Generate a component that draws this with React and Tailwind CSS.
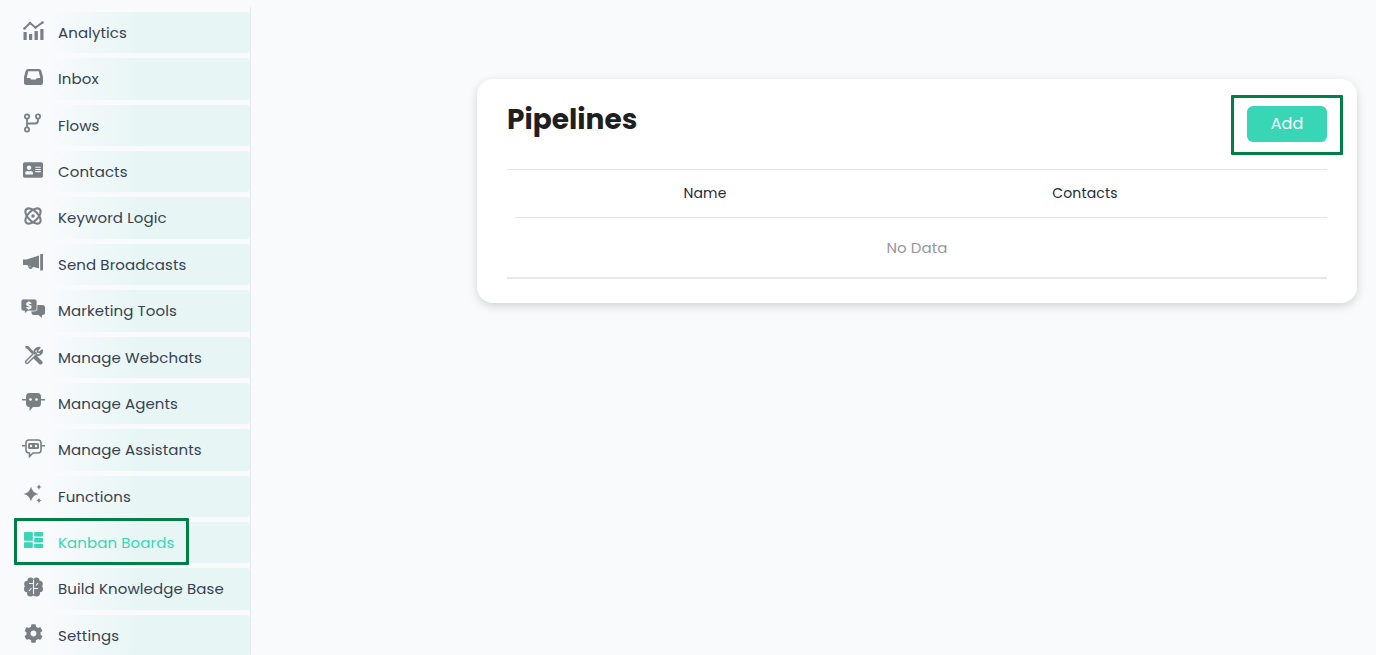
import React from "react";
import { FaCog, FaAddressCard } from "react-icons/fa";

const c = "#7a7f85";
const bg = "#f3f9f9";
const Analytics = () => (
  <svg width="21" height="19" viewBox="0 0 21 19" fill={c}>
    <rect x="0.5" y="11" width="3.2" height="8" rx=".6" /><rect x="6" y="13" width="3.2" height="6" rx=".6" /><rect x="11.5" y="10" width="3.4" height="9" rx=".6" /><rect x="17.3" y="8" width="3.2" height="11" rx=".6" />
    <path d="M1.5 7.500L7 2l5.500 4.500L19.500 1.500" fill="none" stroke={c} strokeWidth="1.900" />
    <circle cx="1.500" cy="7.500" r="1.300" /><circle cx="7" cy="2" r="1.300" /><circle cx="12.500" cy="6.500" r="1.300" /><circle cx="19.500" cy="1.500" r="1.300" />
  </svg>
);
const Inbox = () => (
  <svg width="19" height="16" viewBox="0 0 19 16" fill={c}>
    <path fillRule="evenodd" d="M4 0h11a2.500 2.500 0 012.400 1.900L19 8v5.500a2.500 2.500 0 01-2.500 2.500h-14A2.500 2.500 0 010 13.500V8l1.600-6.100A2.500 2.500 0 014 0zm.3 2.200L2.700 9H6l1.200 1.500h4.600L13 9h3.300l-1.600-6.800z" />
  </svg>
);
const Flows = () => (
  <svg width="20" height="20" viewBox="0 0 20 20" fill="none" stroke={c} strokeWidth="1.800">
    <circle cx="4" cy="3.500" r="2.100" /><circle cx="15" cy="3.500" r="2.100" /><circle cx="4" cy="16.500" r="2.100" />
    <path d="M4 5.600v8.800M15 5.600v1.900a3 3 0 01-3 3H4" />
  </svg>
);
const Atom = () => (
  <svg width="20" height="20" viewBox="0 0 20 20" fill="none" stroke={c} strokeWidth="2.100">
    <ellipse cx="10" cy="10" rx="9.500" ry="5" transform="rotate(45 10 10)" />
    <ellipse cx="10" cy="10" rx="9.500" ry="5" transform="rotate(-45 10 10)" />
    <circle cx="10" cy="10" r="1.800" fill={c} stroke="none" />
  </svg>
);
const Horn = () => (
  <svg width="20" height="17" viewBox="0 0 20 17" fill={c}>
    <path d="M0 5.500h3.500L16 1.500v13L3.500 11H0z" />
    <rect x="17.200" y="0" width="2.800" height="16.500" rx=".5" />
    <path d="M5 11l.5 2.500a2.300 2.300 0 004.300-.2l.2-1.300-2-.5-.3 1a.6.6 0 01-1.100 0L6.300 11z" />
  </svg>
);
const Marketing = () => (
  <svg width="24" height="19" viewBox="0 0 24 19" fill={c}>
    <path d="M10 6h11.500A2.500 2.500 0 0124 8.500v5a2.500 2.500 0 01-2.500 2.500h-.5v3l-3.500-3H13a2.500 2.500 0 01-2.500-2.500z" />
    <path d="M2.500 0h11A2.500 2.500 0 0116 2.500v7a2.500 2.500 0 01-2.500 2.500h-7L3.500 15v-3h-1A2.500 2.500 0 010 9.500v-7A2.500 2.500 0 012.500 0z" stroke={bg} strokeWidth="0.800" />
    <text x="8" y="9.500" fontSize="9.500" fontWeight="700" fill="#fff" textAnchor="middle" fontFamily="Poppins, Lato, sans-serif">$</text>
  </svg>
);
const Tools = () => (
  <svg width="19" height="19" viewBox="0 0 19 19" fill="none" stroke={c}>
    <path d="M1.500 1.500l1.800-.5L9 7" strokeWidth="2.600" strokeLinejoin="round" />
    <path d="M10.500 10.500L16.500 16.500" strokeWidth="4" strokeLinecap="round" />
    <path d="M3 16L11 8" strokeWidth="4.200" strokeLinecap="round" />
    <path d="M3 16L11 8" stroke={bg} strokeWidth="1.500" strokeLinecap="round" />
    <path d="M11 8.200a4.200 4.200 0 01.700-5.200 4.400 4.400 0 014-1.400l-2.400 2.400.4 2 2 .5 2.400-2.400a4.300 4.300 0 01-1.400 4 4.200 4.200 0 01-4.700.6" strokeWidth="1.800" strokeLinejoin="round" />
  </svg>
);
const Agent = () => (
  <svg width="23" height="20" viewBox="0 0 23 20" fill={c}>
    <path d="M7.500 1h8a3.500 3.500 0 013.500 3.500v7a3.500 3.500 0 01-3.500 3.500H11l-3.500 4v-4A3.500 3.500 0 014 11.500v-7A3.500 3.500 0 017.500 1z" />
    <rect x="0" y="7" width="4" height="1.500" /><rect x="19" y="7" width="4" height="1.500" />
    <circle cx="8.500" cy="7.500" r="1.300" fill="#fff" /><circle cx="14.500" cy="7.500" r="1.300" fill="#fff" />
  </svg>
);
const Assistant = () => (
  <svg width="23" height="20" viewBox="0 0 23 20" fill="none" stroke={c} strokeWidth="1.600">
    <path d="M7 2h9a3 3 0 013 3v7a3 3 0 01-3 3h-5l-3.500 3.500V15H7a3 3 0 01-3-3V5a3 3 0 013-3z" />
    <path d="M0 7.800h3.500M19.500 7.800H23" />
    <rect x="6" y="5" width="11" height="6" rx="1.500" fill={c} stroke="none" />
    <circle cx="9" cy="8" r="1.200" fill="#fff" stroke="none" /><circle cx="14" cy="8" r="1.200" fill="#fff" stroke="none" />
  </svg>
);
const Stars = () => (
  <svg width="20" height="20" viewBox="0 0 20 20" fill={c}>
    <path d="M8 2.500C9 6.500 11 9 15.500 10 11 11 9 13.500 8 17.500 7 13.500 5 11 .500 10 5 9 7 6.500 8 2.500z" />
    <path d="M16 0c.4 2 1 2.600 3 3-2 .4-2.600 1-3 3-.4-2-1-2.600-3-3 2-.4 2.600-1 3-3z" />
    <path d="M16 13.500c.4 2 1 2.600 3 3-2 .4-2.600 1-3 3-.4-2-1-2.600-3-3 2-.4 2.600-1 3-3z" />
  </svg>
);
const Kanban = () => (
  <svg width="19" height="16" viewBox="0 0 19 16" fill="#38d6b4" style={{ marginTop: "-1px" }}>
    <rect x="0" y="0" width="8.800" height="8.800" rx=".8" /><rect x="0" y="10.200" width="8.800" height="5.800" rx=".8" />
    <rect x="10.200" y="0" width="8.800" height="4.600" rx=".8" /><rect x="10.200" y="6" width="8.800" height="4.400" rx=".8" /><rect x="10.200" y="11.800" width="8.800" height="4.200" rx=".8" />
  </svg>
);
const Brain = () => (
  <svg width="19" height="20" viewBox="0 0 19 20">
    <g fill={c}>
      <circle cx="6.500" cy="3.500" r="3" /><circle cx="12.500" cy="3.500" r="3" />
      <circle cx="3.500" cy="7" r="3.300" /><circle cx="15.500" cy="7" r="3.300" />
      <circle cx="3.300" cy="12" r="3.300" /><circle cx="15.700" cy="12" r="3.300" />
      <circle cx="6.500" cy="16" r="3.500" /><circle cx="12.500" cy="16" r="3.500" />
      <rect x="4" y="3" width="11" height="15" />
    </g>
    <path d="M9.500 3v14M5 6.500h4.500M9.500 11.500H14M5 14l2.500-3M14 6l-2 2.500" stroke="#eef7f5" strokeWidth="1.100" fill="none" />
  </svg>
);

const items = [
  ["Analytics", <Analytics />],
  ["Inbox", <Inbox />],
  ["Flows", <Flows />],
  ["Contacts", <FaAddressCard size={20} color={c} />],
  ["Keyword Logic", <Atom />],
  ["Send Broadcasts", <Horn />],
  ["Marketing Tools", <Marketing />],
  ["Manage Webchats", <Tools />],
  ["Manage Agents", <Agent />],
  ["Manage Assistants", <Assistant />],
  ["Functions", <Stars />],
  ["Kanban Boards", <Kanban />, true],
  ["Build Knowledge Base", <Brain />],
  ["Settings", <FaCog size={19} color={c} />],
];

export default function App() {
  return (
    <div className="relative h-[655px] w-[1376px] overflow-hidden bg-[#f8fafc] font-['Poppins','Lato','Noto_Sans',sans-serif]">
      <div className="flex h-full">
        <aside className="mt-[7px] w-[251px] shrink-0 border-r border-[#e2e8ec]">
          <nav className="-mt-[7px] flex flex-col gap-[5px] pl-[14px] pt-[12px]">
            {items.map(([label, icon, active]) => (
              <div key={label} className="flex h-[41.36px] items-center rounded-[4px] bg-gradient-to-r from-[#f8fafc] from-[15%] to-[#e7f6f4] to-[52%]">
                <span className="flex w-[38px] -translate-y-[2px] justify-center">{icon}</span>
                <span className={`ml-[6px] pt-[1.150px] text-[15px] tracking-[0.1px] ${active ? "text-[#38d6b4]" : "text-[#374151]"}`}>{label}</span>
              </div>
            ))}
          </nav>
        </aside>
        <main className="flex-1 pl-[226px] pr-[19px] pt-[79px]">
          <section className="h-[224px] rounded-[16px] bg-white px-[30px] shadow-[0_3px_10px_rgba(0,0,0,0.16)]">
            <div className="flex h-[91px] items-start justify-between border-b border-[#e5e7eb] pt-[27px]">
              <h1 className="mt-[1px] text-[28px] font-bold leading-[26px] text-[#1f1f1f]">Pipelines</h1>
              <button className="h-[36px] w-[80px] rounded-[6px] bg-[#38d6b4] text-[16px] text-white">Add</button>
            </div>
            <div className="ml-[8px] flex h-[48px] items-center border-b border-[#e5e7eb] text-[14px] tracking-[0.15px] text-[#1f2937]">
              <div className="w-[380px] text-center">Name</div>
              <div className="w-[380px] text-center">Contacts</div>
            </div>
            <div className="flex h-[61px] items-center justify-center border-b-2 border-[#e5e7eb] pt-[2px] text-[15px] tracking-[0.1px] text-[#94979c]">No Data</div>
          </section>
        </main>
      </div>
      <div className="absolute left-[14px] top-[518px] h-[47px] w-[175px] rounded-[1px] border-[3px] border-[#008046]" />
      <div className="absolute left-[1231px] top-[95px] h-[60px] w-[112px] rounded-[1px] border-[3px] border-[#008046]" />
    </div>
  );
}
